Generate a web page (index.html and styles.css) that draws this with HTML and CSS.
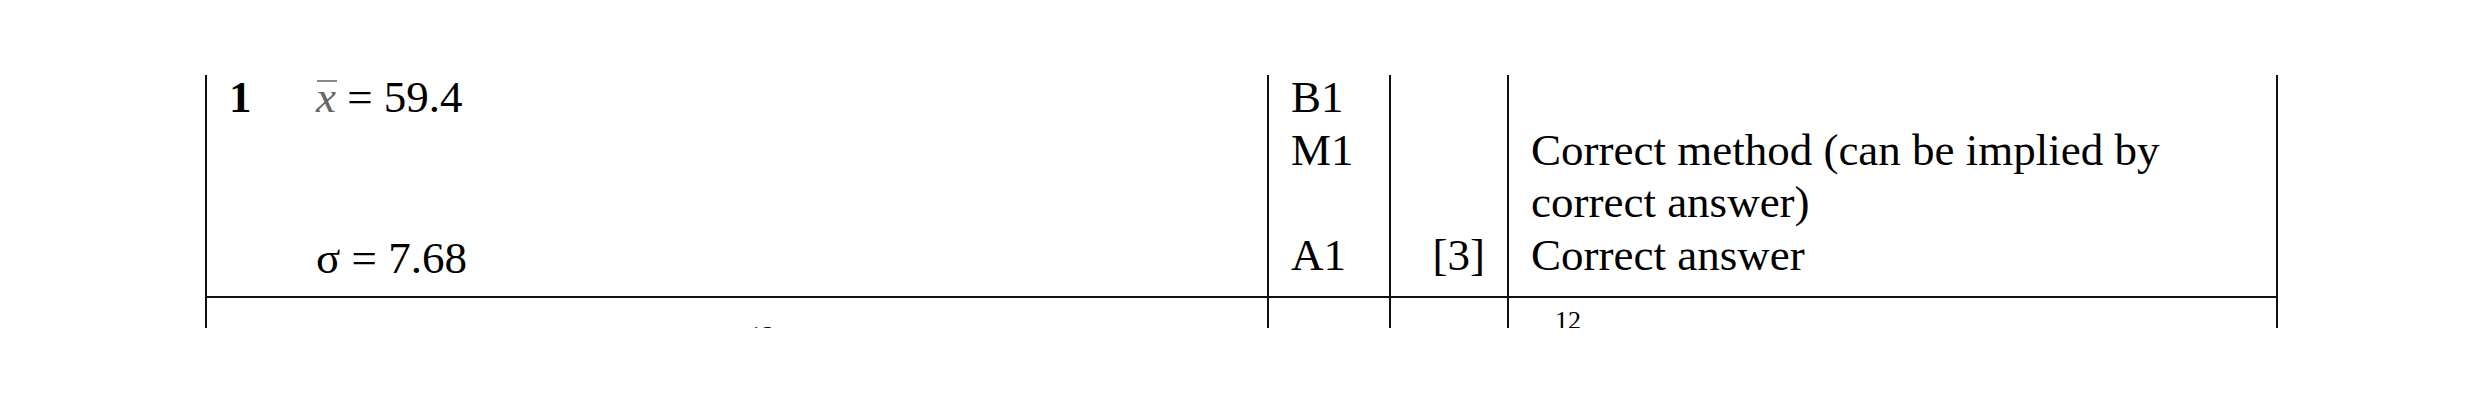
FILE: index.html
```html
<!DOCTYPE html>
<html>
<head>
<meta charset="utf-8">
<link rel="stylesheet" href="styles.css">
</head>
<body>
<div class="page">
  <div class="table">
    <div class="cell c1 r1">
      <div class="qgrid">
        <div class="qnum">1</div>
        <div class="ans">
          <div class="line"><span class="xbar">x</span> = 59.4</div>
          <div class="line"></div>
          <div class="line"></div>
          <div class="line last">σ = 7.68</div>
        </div>
      </div>
    </div>
    <div class="cell c2 r1">
      <div class="stack">
        <div class="line">B1</div>
        <div class="line">M1</div>
        <div class="line"></div>
        <div class="line">A1</div>
      </div>
    </div>
    <div class="cell c3 r1">
      <div class="stack">
        <div class="line"></div>
        <div class="line"></div>
        <div class="line"></div>
        <div class="line">[3]</div>
      </div>
    </div>
    <div class="cell c4 r1">
      <div class="stack">
        <div class="line"></div>
        <div class="guidance">Correct method (can be implied by correct answer)</div>
        <div class="line">Correct answer</div>
      </div>
    </div>

    <div class="cell c1 r2"><span class="small big">12</span></div>
    <div class="cell c2 r2"></div>
    <div class="cell c3 r2"></div>
    <div class="cell c4 r2"><span class="small">12</span></div>
  </div>
</div>
</body>
</html>
```

FILE: styles.css
```css
html, body {
  margin: 0;
  padding: 0;
  background: #ffffff;
}

body {
  font-family: "Liberation Serif", "Times New Roman", serif;
  color: #000;
  width: 2480px;
  height: 404px;
}

.page {
  padding: 75px 0 0 205px;
}

.table {
  display: grid;
  grid-template-columns: 1062px 122px 118px 771px;
  grid-template-rows: 223px 30px;
  width: 2073px;
  height: 253px;
}

.cell {
  border-left: 2px solid #111;
  box-sizing: border-box;
  font-family: "Liberation Serif", "Times New Roman", serif;
  font-size: 45px;
  line-height: 52.5px;
}

.c4 {
  border-right: 2px solid #111;
}

.r1 {
  border-bottom: 2px solid #111;
}

.stack,
.qgrid {
  margin-top: -4px;
}

.line {
  height: 52.5px;
  white-space: nowrap;
}

.qgrid {
  display: grid;
  grid-template-columns: 87px 1fr;
  padding-left: 22px;
}

.qnum {
  font-weight: bold;
}

.line.last {
  margin-top: 3px;
}

.xbar {
  position: relative;
  font-style: italic;
  color: #666;
}

.xbar::before {
  content: "";
  position: absolute;
  left: 1px;
  right: -1px;
  top: 8px;
  height: 2px;
  background: #888;
}

.c2.r1 {
  padding-left: 22px;
}

.c3.r1 {
  text-align: right;
  padding-right: 22px;
}

.c4.r1 {
  padding-left: 22px;
}

.guidance {
  max-width: 680px;
}

.r2 {
  overflow: hidden;
}

.small {
  display: block;
  font-size: 26px;
  line-height: 26px;
  padding: 10px 0 0 46px;
}

.small.big {
  padding: 25px 0 0 542px;
}
```
